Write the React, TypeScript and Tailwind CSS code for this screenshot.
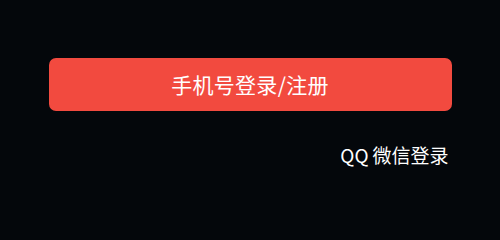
export default function App() {
  return (
    <div className="w-[500px] h-[240px] bg-[#04070b] flex flex-col items-center pt-[58px]" style={{ fontFamily: '"Noto Sans CJK SC", "Noto Sans", sans-serif' }}>
      <button className="w-[403px] h-[53px] rounded-[7px] bg-[#f24a3f] text-white text-[21px] tracking-[0.3px] flex items-center justify-center">
        手机号登录/注册
      </button>
      <div className="w-[403px] flex justify-end mt-[30px] pr-[3px]">
        <span className="text-white text-[19px] leading-[28px]">QQ<span className="ml-[4px]">微信登录</span></span>
      </div>
    </div>
  );
}
